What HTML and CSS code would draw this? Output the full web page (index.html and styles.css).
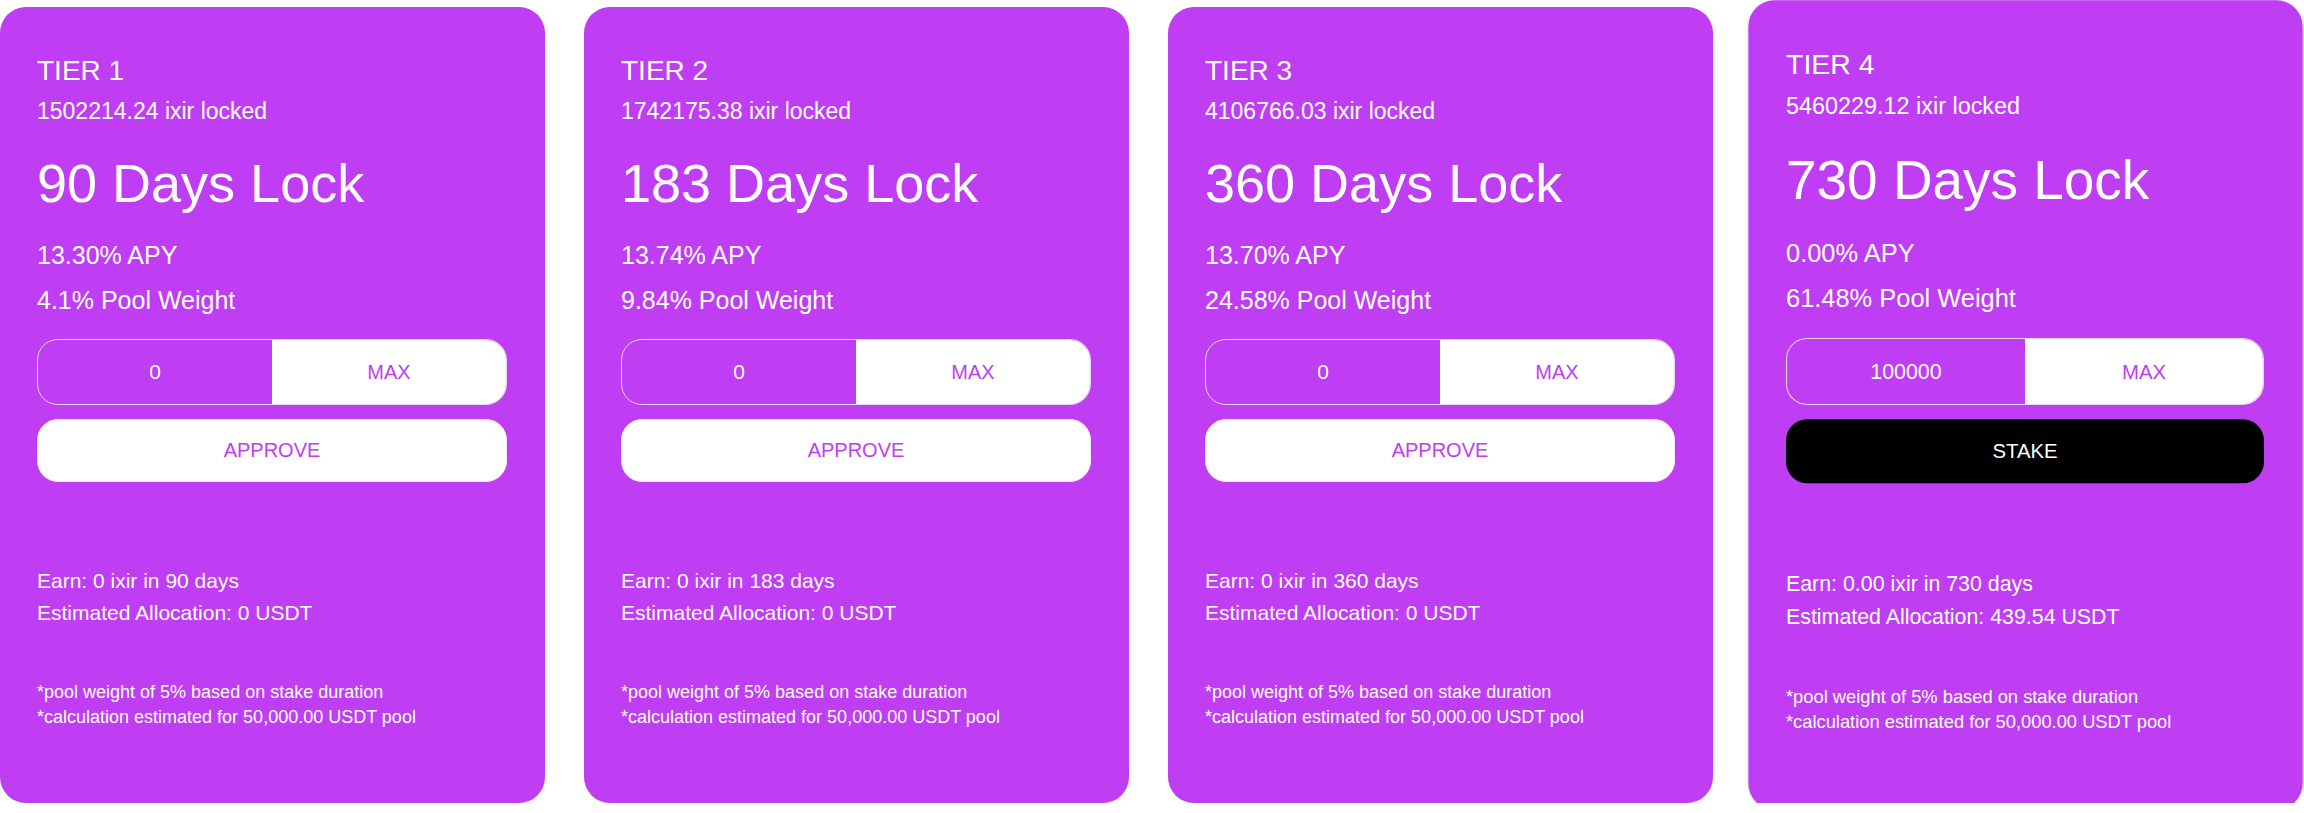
FILE: index.html
```html
<!DOCTYPE html>
<html lang="en">
<head>
<meta charset="utf-8">
<title>Staking tiers</title>
<link rel="stylesheet" href="styles.css">
</head>
<body>
<main class="tiers">
  <section class="card">
    <div class="tier">TIER 1</div>
    <div class="locked">1502214.24 ixir locked</div>
    <div class="lock">90 Days Lock</div>
    <div class="apy">13.30% APY</div>
    <div class="weight">4.1% Pool Weight</div>
    <div class="amount">
      <input class="amount-input" type="text" value="0">
      <button class="max">MAX</button>
    </div>
    <button class="action approve">APPROVE</button>
    <div class="earn">Earn: 0 ixir in 90 days</div>
    <div class="alloc">Estimated Allocation: 0 USDT</div>
    <div class="notes">
      <div>*pool weight of 5% based on stake duration</div>
      <div>*calculation estimated for 50,000.00 USDT pool</div>
    </div>
  </section>
  <section class="card">
    <div class="tier">TIER 2</div>
    <div class="locked">1742175.38 ixir locked</div>
    <div class="lock">183 Days Lock</div>
    <div class="apy">13.74% APY</div>
    <div class="weight">9.84% Pool Weight</div>
    <div class="amount">
      <input class="amount-input" type="text" value="0">
      <button class="max">MAX</button>
    </div>
    <button class="action approve">APPROVE</button>
    <div class="earn">Earn: 0 ixir in 183 days</div>
    <div class="alloc">Estimated Allocation: 0 USDT</div>
    <div class="notes">
      <div>*pool weight of 5% based on stake duration</div>
      <div>*calculation estimated for 50,000.00 USDT pool</div>
    </div>
  </section>
  <section class="card">
    <div class="tier">TIER 3</div>
    <div class="locked">4106766.03 ixir locked</div>
    <div class="lock">360 Days Lock</div>
    <div class="apy">13.70% APY</div>
    <div class="weight">24.58% Pool Weight</div>
    <div class="amount">
      <input class="amount-input" type="text" value="0">
      <button class="max">MAX</button>
    </div>
    <button class="action approve">APPROVE</button>
    <div class="earn">Earn: 0 ixir in 360 days</div>
    <div class="alloc">Estimated Allocation: 0 USDT</div>
    <div class="notes">
      <div>*pool weight of 5% based on stake duration</div>
      <div>*calculation estimated for 50,000.00 USDT pool</div>
    </div>
  </section>
  <section class="card card-active">
    <div class="tier">TIER 4</div>
    <div class="locked">5460229.12 ixir locked</div>
    <div class="lock">730 Days Lock</div>
    <div class="apy">0.00% APY</div>
    <div class="weight">61.48% Pool Weight</div>
    <div class="amount">
      <input class="amount-input" type="text" value="100000">
      <button class="max">MAX</button>
    </div>
    <button class="action stake">STAKE</button>
    <div class="earn">Earn: 0.00 ixir in 730 days</div>
    <div class="alloc">Estimated Allocation: 439.54 USDT</div>
    <div class="notes">
      <div>*pool weight of 5% based on stake duration</div>
      <div>*calculation estimated for 50,000.00 USDT pool</div>
    </div>
  </section>
</main>
</body>
</html>
```

FILE: styles.css
```css
* { box-sizing: border-box; }

html, body {
  margin: 0;
  padding: 0;
  background: #ffffff;
}

body {
  font-family: "Liberation Sans", Arial, sans-serif;
  color: #ffffff;
}

.tiers {
  display: grid;
  grid-template-columns: repeat(4, 545px);
  column-gap: 39px;
  padding: 7px 0 0 0;
}

.card {
  background: #bf3df2;
  border-radius: 26px;
  height: 796px;
  padding: 47px 38px 0 37px;
  display: flex;
  flex-direction: column;
}

.card-active {
  transform: translateX(1px) scale(1.017);
  box-shadow: 0 0 3px rgba(0, 0, 0, 0.18);
}

.tier {
  font-size: 28px;
  line-height: 34px;
}

.locked {
  font-size: 23px;
  line-height: 30px;
  margin-top: 8px;
}

.lock {
  font-size: 54px;
  line-height: 64px;
  margin-top: 25px;
}

.apy {
  font-size: 25px;
  line-height: 34px;
  margin-top: 23px;
}

.weight {
  font-size: 25px;
  line-height: 34px;
  margin-top: 11px;
}

.amount {
  margin-top: 22px;
  height: 66px;
  display: grid;
  grid-template-columns: 1fr 1fr;
  border: 1.5px solid #e4d9ea;
  border-radius: 21px;
  overflow: hidden;
}

.amount-input {
  min-width: 0;
  border: none;
  background: transparent;
  color: #ffffff;
  font-family: inherit;
  font-size: 21px;
  text-align: center;
  outline: none;
  padding: 0;
}

.max {
  border: none;
  background: #ffffff;
  color: #bf3df2;
  font-family: inherit;
  font-size: 20px;
  padding: 0;
}

.action {
  margin-top: 14px;
  height: 63px;
  border-radius: 21px;
  font-family: inherit;
  font-size: 20px;
  padding: 0;
}

.approve {
  background: #ffffff;
  color: #bf3df2;
  border: 1px solid #efe6f3;
}

.stake {
  background: #000000;
  color: #ffffff;
  border: none;
}

.earn {
  font-size: 21px;
  line-height: 32px;
  margin-top: 83px;
}

.alloc {
  font-size: 21px;
  line-height: 32px;
}

.notes {
  margin-top: 51px;
  font-size: 18px;
  line-height: 25px;
}
```
